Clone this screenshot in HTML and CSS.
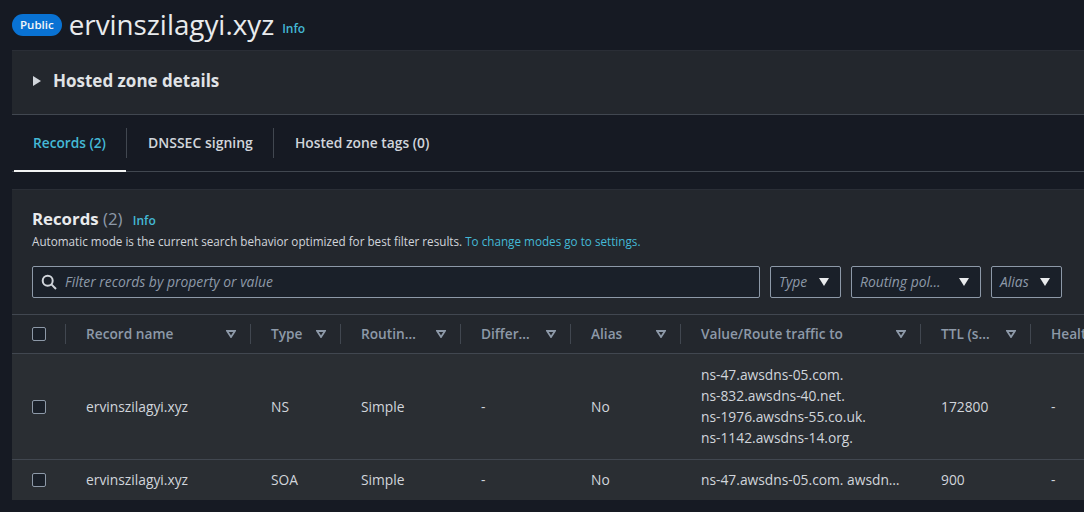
FILE: index.html
```html
<!DOCTYPE html>
<html lang="en">
<head>
  <meta charset="UTF-8" />
  <title>ervinszilagyi.xyz</title>
  <link rel="stylesheet" href="styles.css">
</head>
<body>
  <div class="title-row">
    <span class="badge">Public</span>
    <h1>ervinszilagyi.xyz</h1>
    <a class="info">Info</a>
  </div>

  <div class="details">
    <svg class="caret" width="8" height="10" viewBox="0 0 8 10"><path d="M0 0 L8 5 L0 10 Z" fill="#d1d5db"/></svg>
    <h2>Hosted zone details</h2>
  </div>

  <div class="tabs">
    <div class="tab active">Records (2)</div>
    <div class="tab">DNSSEC signing</div>
    <div class="tab tab-tags">Hosted zone tags (0)</div>
  </div>

  <section class="card">
    <div class="card-head">
      <div class="card-title"><strong>Records</strong> <span class="count">(2)</span> <a class="info">Info</a></div>
      <p class="hint">Automatic mode is the current search behavior optimized for best filter results. <a>To change modes go to settings.</a></p>
      <div class="filters">
        <div class="search">
          <svg width="16" height="16" viewBox="0 0 16 16" fill="none" stroke="#d1d5db" stroke-width="2"><circle cx="6.7" cy="6.7" r="5"/><path d="M10.4 10.4 L15 15"/></svg>
          <span>Filter records by property or value</span>
        </div>
        <div class="select sel-type"><span>Type</span><i class="tri"></i></div>
        <div class="select sel-routing"><span>Routing pol…</span><i class="tri"></i></div>
        <div class="select sel-alias"><span>Alias</span><i class="tri"></i></div>
      </div>
    </div>

    <table>
      <colgroup>
        <col class="c-check"><col class="c-name"><col class="c-type"><col class="c-rout"><col class="c-diff"><col class="c-alias"><col class="c-value"><col class="c-ttl"><col class="c-health">
      </colgroup>
      <thead>
        <tr>
          <th><div class="th"><span class="box"></span></div></th>
          <th><div class="th"><span>Record name</span><svg class="sort" viewBox="0 0 10 8"><path d="M1 1 H9 L5 7 Z"/></svg></div></th>
          <th><div class="th"><span>Type</span><svg class="sort" viewBox="0 0 10 8"><path d="M1 1 H9 L5 7 Z"/></svg></div></th>
          <th><div class="th"><span>Routin…</span><svg class="sort" viewBox="0 0 10 8"><path d="M1 1 H9 L5 7 Z"/></svg></div></th>
          <th><div class="th"><span>Differ…</span><svg class="sort" viewBox="0 0 10 8"><path d="M1 1 H9 L5 7 Z"/></svg></div></th>
          <th><div class="th"><span>Alias</span><svg class="sort" viewBox="0 0 10 8"><path d="M1 1 H9 L5 7 Z"/></svg></div></th>
          <th><div class="th"><span>Value/Route traffic to</span><svg class="sort" viewBox="0 0 10 8"><path d="M1 1 H9 L5 7 Z"/></svg></div></th>
          <th><div class="th"><span>TTL (s…</span><svg class="sort" viewBox="0 0 10 8"><path d="M1 1 H9 L5 7 Z"/></svg></div></th>
          <th><div class="th last"><span>Health</span></div></th>
        </tr>
      </thead>
      <tbody>
        <tr class="row-ns">
          <td class="check"><span class="box"></span></td>
          <td>ervinszilagyi.xyz</td>
          <td>NS</td>
          <td>Simple</td>
          <td>-</td>
          <td>No</td>
          <td class="value">ns-47.awsdns-05.com.<br>ns-832.awsdns-40.net.<br>ns-1976.awsdns-55.co.uk.<br>ns-1142.awsdns-14.org.</td>
          <td>172800</td>
          <td>-</td>
        </tr>
        <tr class="row-soa">
          <td class="check"><span class="box"></span></td>
          <td>ervinszilagyi.xyz</td>
          <td>SOA</td>
          <td>Simple</td>
          <td>-</td>
          <td>No</td>
          <td>ns-47.awsdns-05.com. awsdn…</td>
          <td>900</td>
          <td>-</td>
        </tr>
      </tbody>
    </table>
  </section>
</body>
</html>
```

FILE: styles.css
```css
* {
  box-sizing: border-box;
}

html, body {
  height: 512px;
  overflow: hidden;
}

body {
  margin: 0;
  padding-left: 12px;
  background: #161a23;
  color: #d1d5db;
  font-family: "Open Sans", "Noto Sans", sans-serif;
  font-size: 13.8px;
}

a {
  color: #44b9d6;
}

.title-row {
  display: flex;
  align-items: center;
  height: 50px;
}

.badge {
  background: #0972d3;
  color: #f4f6f8;
  font-size: 11.5px;
  font-weight: 600;
  line-height: 22px;
  height: 22px;
  padding: 0 8px;
  border-radius: 11px;
  margin-right: 7px;
}

h1 {
  margin: 0 0 3px;
  font-size: 27.8px;
  font-weight: 400;
  color: #e9ebed;
}

.info {
  font-size: 12px;
  font-weight: 600;
}

.title-row .info {
  margin: 6px 0 0 8px;
}

.details {
  display: flex;
  align-items: center;
  height: 65px;
  padding: 0 0 4px 21px;
  background: #23272d;
  border-top: 1px solid #2a2e36;
  border-bottom: 1px solid #414750;
}

h2 {
  margin: 0 0 0 12px;
  font-size: 17px;
  font-weight: 700;
  color: #e0e3e6;
}

.tabs {
  display: flex;
  align-items: center;
  height: 57px;
  border-bottom: 1px solid #414750;
}

.tab {
  position: relative;
  display: flex;
  align-items: center;
  height: 30px;
  padding: 0 20px 2px 21px;
  font-size: 14px;
  font-weight: 600;
  white-space: nowrap;
  color: #d1d5db;
  border-right: 1px solid #414750;
}

.tab:last-child {
  border-right: none;
}

.tab.active {
  width: 113px;
  margin-left: 2px;
  padding-left: 19px;
  padding-right: 0;
  font-size: 13.7px;
  color: #44b9d6;
}

.tab-tags {
  font-size: 13.8px;
}

.tab.active::after {
  content: "";
  position: absolute;
  left: 0;
  right: 0;
  bottom: -14px;
  height: 2px;
  background: #f2f3f3;
}

.card {
  margin-top: 17px;
  height: 311px;
  background: #23272d;
  border-top: 1px solid #2a2e36;
  overflow: hidden;
}

.card-head {
  padding: 18px 22px 0 20px;
  height: 125px;
  border-bottom: 1px solid #414750;
}

.card-title {
  font-size: 16.8px;
  line-height: 22px;
  color: #e9ebed;
}

.card-title strong {
  font-weight: 700;
}

.count {
  color: #8d99a8;
}

.card-title .info {
  margin-left: 6px;
}

.hint {
  margin: 1px 0 0;
  font-size: 11.7px;
  line-height: 16px;
  color: #d1d5db;
}

.filters {
  display: flex;
  margin-top: 17px;
  height: 32px;
}

.search, .select {
  display: flex;
  align-items: center;
  background: #1a2029;
  border: 1px solid #8d99a8;
  border-radius: 2px;
  font-style: italic;
  font-size: 13.9px;
  color: #8d99a8;
}

.search {
  width: 728px;
  padding-left: 8px;
}

.search span, .select span {
  padding-bottom: 2px;
}

.search span {
  margin-left: 8px;
}

.select {
  justify-content: space-between;
  margin-left: 10px;
  padding: 0 11px 0 8px;
  white-space: nowrap;
}

.sel-type { width: 71px; }
.sel-routing { width: 130px; }
.sel-alias { width: 71px; }

.tri {
  width: 0;
  height: 0;
  border-left: 5.5px solid transparent;
  border-right: 5.5px solid transparent;
  border-top: 8px solid #e9ebed;
}

table {
  width: 1200px;
  table-layout: fixed;
  border-collapse: collapse;
}

.c-check { width: 54px; }
.c-name { width: 185px; }
.c-type { width: 90px; }
.c-rout { width: 120px; }
.c-diff { width: 110px; }
.c-alias { width: 110px; }
.c-value { width: 240px; }
.c-ttl { width: 110px; }
.c-health { width: 181px; }

th {
  height: 38px;
  padding: 0;
  border-bottom: 1px solid #414750;
  text-align: left;
  font-size: 13.7px;
  font-weight: 600;
  color: #8d99a8;
}

.th {
  display: flex;
  align-items: center;
  justify-content: space-between;
  height: 20px;
  padding: 0 14px 0 20px;
  border-right: 1px solid #414750;
}

.th.last {
  border-right: none;
}

.sort {
  width: 10px;
  height: 8px;
  fill: none;
  stroke: #8d99a8;
  stroke-width: 1.8;
}

.box {
  display: inline-block;
  width: 14px;
  height: 14px;
  background: #1a2029;
  border: 1px solid #8d99a8;
  border-radius: 2px;
}

td {
  padding: 0 0 0 20px;
  background: #2a2e33;
  color: #d1d5db;
  white-space: nowrap;
  overflow: hidden;
}

td.check .box {
  display: block;
  margin-top: 1px;
}

.row-ns td {
  height: 106px;
  border-bottom: 1px solid #414750;
}

.row-soa td {
  height: 41px;
}

.value {
  line-height: 21px;
}
```
